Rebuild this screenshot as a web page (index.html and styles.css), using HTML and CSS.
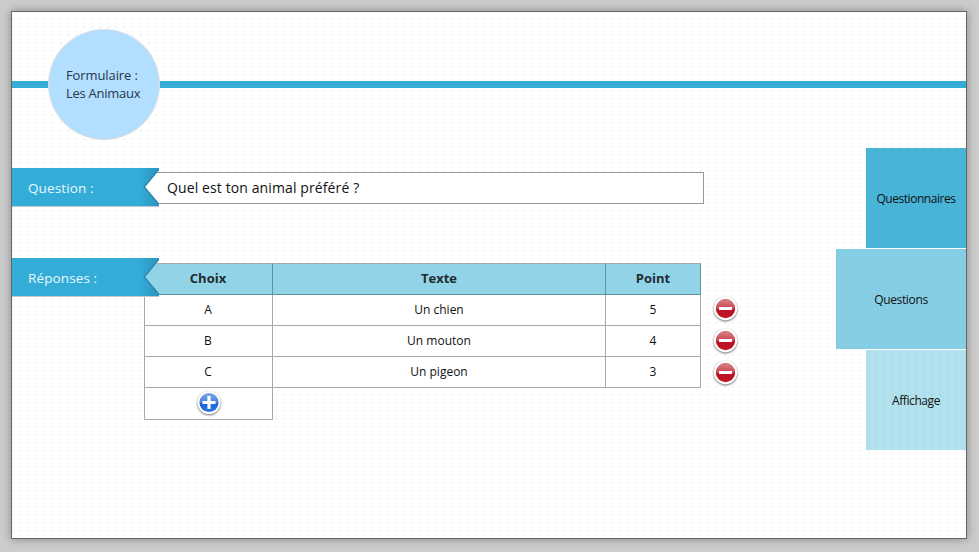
FILE: index.html
```html
<!DOCTYPE html>
<html lang="fr">
<head>
<meta charset="utf-8">
<title>Formulaire : Les Animaux</title>
<link rel="stylesheet" href="styles.css">
</head>
<body>
<svg class="defs" aria-hidden="true">
  <defs>
    <linearGradient id="red" x1="0" y1="0" x2="0" y2="1"><stop offset="0" stop-color="#dc828a"/><stop offset=".5" stop-color="#c84450"/><stop offset=".51" stop-color="#bb1422"/><stop offset="1" stop-color="#bb1422"/></linearGradient>
    <linearGradient id="blue" x1="0" y1="0" x2="0" y2="1"><stop offset="0" stop-color="#7ba9ea"/><stop offset=".5" stop-color="#4682dc"/><stop offset=".51" stop-color="#1e66d4"/><stop offset="1" stop-color="#2374e8"/></linearGradient>
    <linearGradient id="fold" x1="0" y1="0" x2="1" y2="0"><stop offset="0" stop-color="#34acd8"/><stop offset=".86" stop-color="#34acd8"/><stop offset="1" stop-color="#2b95bf"/></linearGradient>
    <symbol id="minus" viewBox="0 0 26 26"><circle cx="12.5" cy="12.5" r="11.7" fill="#fff"/><circle cx="12.5" cy="12.5" r="9.7" fill="url(#red)"/><path d="M6 11h13v3H6z" fill="#fff"/></symbol>
    <symbol id="plus" viewBox="0 0 26 26"><circle cx="13" cy="11.5" r="11.5" fill="#fff"/><circle cx="13" cy="11.5" r="9.6" fill="url(#blue)"/><path d="M11.4 5h3.2v4.9h4.9v3.2h-4.9v4.9h-3.2v-4.9H6.5V9.900h4.9z" fill="#fff"/></symbol>
    <symbol id="ribbon" viewBox="0 0 147 39"><path d="M0 38h147v1H0z" fill="#c4c8ca"/><path d="M0 0h147v1L132 19l15 18v1H0z" fill="url(#fold)"/><path d="M147 1L132.2 19 147 36.5" fill="none" stroke="#2789b1" stroke-width="1.5"/></symbol>
  </defs>
</svg>
<main class="sheet">
  <header class="top">
    <h1 class="badge"><span>Formulaire :</span><br><span class="name">Les Animaux</span></h1>
  </header>
  <div class="body">
    <section class="form">
      <div class="question">
        <div class="label"><svg><use href="#ribbon"/></svg><span>Question :</span></div>
        <div class="field">Quel est ton animal préféré ?</div>
      </div>
      <div class="answers">
        <div class="label"><svg><use href="#ribbon"/></svg><span>Réponses :</span></div>
        <div class="tablewrap">
          <div class="grid">
            <b class="cell">Choix</b><b class="cell">Texte</b><b class="cell">Point</b>
            <span class="cell">A</span><span class="cell">Un chien</span><span class="cell">5</span>
            <span class="cell">B</span><span class="cell">Un mouton</span><span class="cell">4</span>
            <span class="cell">C</span><span class="cell">Un pigeon</span><span class="cell">3</span>
            <span class="cell add"><svg class="icon"><use href="#plus"/></svg></span>
          </div>
          <div class="remove">
            <svg class="icon"><use href="#minus"/></svg>
            <svg class="icon"><use href="#minus"/></svg>
            <svg class="icon"><use href="#minus"/></svg>
          </div>
        </div>
      </div>
    </section>
    <nav class="tabs">
      <a class="tab t1">Questionnaires</a>
      <a class="tab t2">Questions</a>
      <a class="tab t3">Affichage</a>
    </nav>
  </div>
</main>
</body>
</html>
```
FILE: styles.css
```css
* { box-sizing: border-box; }
body {
  margin: 0;
  height: 552px;
  padding: 11px 12px 13px 11px;
  background: #ccc;
  font-family: "Open Sans", "Noto Sans", sans-serif;
  font-size: 12px;
  color: #111;
  overflow: hidden;
}
.defs { position: absolute; width: 0; height: 0; }
.sheet {
  height: 528px;
  border: 1px solid #666;
  background: conic-gradient(from 0deg at 1px 2px, transparent 270deg, #e5e5e5 270deg) 0 6px / 8px 8px, #fff;
  box-shadow: 0 0 9px rgba(0, 0, 0, .35);
}
.top {
  height: 136px;
  padding: 17px 0 0 36px;
  background: linear-gradient(#34acd8, #34acd8) 0 69px / 100% 7px no-repeat;
}
.badge {
  width: 112px;
  height: 111px;
  margin: 0;
  padding: 36px 0 0 17px;
  border: 1px solid #dcdfe2;
  border-radius: 50%;
  background: #b2dfff;
  color: #26384a;
  font-size: 13px;
  font-weight: 400;
  line-height: 18px;
  letter-spacing: -.1px;
  white-space: nowrap;
}
.name { letter-spacing: -.27px; }
.body { display: flex; justify-content: space-between; }
.form { padding-top: 20px; }
.question, .answers { display: grid; }
.question > *, .answers > * { grid-area: 1 / 1; }
.label {
  display: grid;
  z-index: 1;
  width: 147px;
  height: 39px;
  color: #e9f8ff;
  font-size: 13.5px;
  font-weight: 400;
  line-height: 40px;
}
.label > * { grid-area: 1 / 1; }
.label svg { width: 147px; height: 39px; }
.label span { padding-left: 16px; letter-spacing: .12px; }
.field {
  width: 560px;
  height: 32px;
  margin: 4px 0 0 132px;
  padding-left: 22px;
  border: 1px solid #999;
  background: #fff;
  font-size: 14px;
  line-height: 30px;
  letter-spacing: .11px;
}
.answers { margin-top: 51px; }
.tablewrap { display: flex; margin: 5px 0 0 132px; }
.grid {
  display: grid;
  grid-template-columns: 129px 333px 95px;
  grid-template-rows: 32px 31px 31px 31px 32px;
}
.cell {
  display: flex;
  align-items: center;
  justify-content: center;
  padding: 0 0 2px 0;
  border: solid #a9a9a9;
  border-width: 0 1px 1px 0;
  background: #fff;
}
.cell:nth-child(3n+1) { border-left-width: 1px; padding-right: 1px; }
b.cell {
  border-color: #a9a9a9 #5f929f #5f929f #a9a9a9;
  border-top-width: 1px;
  background: #91d4e7;
  color: #222b30;
  font-size: 13px;
}
.cell.add { padding: 0; }
.remove { display: flex; flex-direction: column; gap: 6px; padding: 33px 0 0 12px; }
.icon { width: 26px; height: 26px; filter: drop-shadow(0 1px 1px rgba(0, 0, 0, .55)); }
.tabs {
  display: flex;
  flex-direction: column;
  align-items: flex-end;
  gap: 1px;
  background: linear-gradient(#fff, #fff) 100% 100px / 100px 1px no-repeat, linear-gradient(#fff, #fff) 100% 201px / 100px 1px no-repeat;
}
.tab { display: flex; align-items: center; justify-content: center; width: 100px; height: 100px; padding-top: 1px; }
.t1 { background: rgba(52, 172, 212, .9); letter-spacing: -.45px; }
.t2 { width: 130px; background: rgba(22, 161, 205, .52); letter-spacing: -.35px; }
.t3 { background: rgba(0, 155, 198, .3); letter-spacing: -.4px; }
```
